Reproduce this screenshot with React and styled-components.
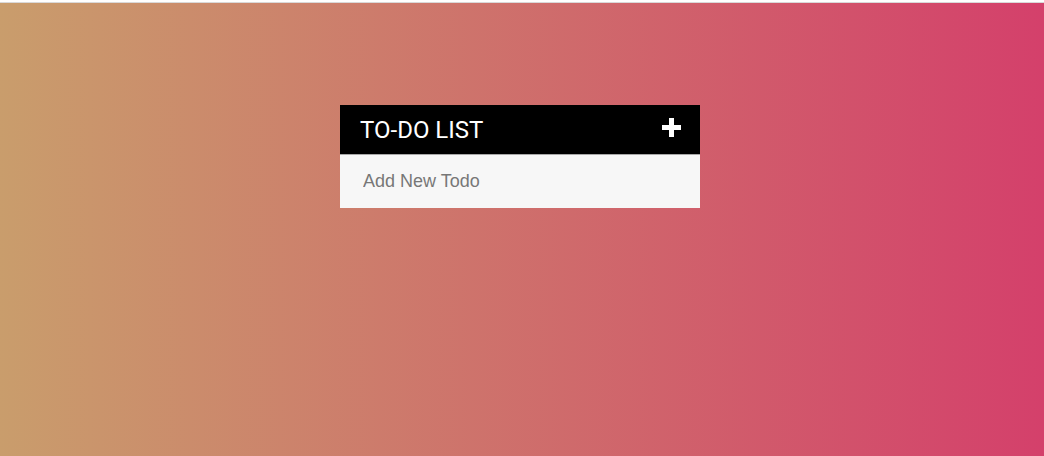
import React from 'react';
import styled, { createGlobalStyle } from 'styled-components';

const GlobalStyle = createGlobalStyle`
  html, body {
    margin: 0;
    padding: 0;
    background: #fff;
  }
`;

const TopStrip = styled.div`
  height: 2px;
  background: #fff;
  border-bottom: 1px solid #d9d9d9;
`;

const Page = styled.div`
  height: 453px;
  background: linear-gradient(to right, #c99d6c, #d4406b);
  display: flex;
  justify-content: center;
  padding: 102px 4px 0 0;
  box-sizing: border-box;
`;

const Card = styled.div`
  width: 360px;
  align-self: flex-start;
`;

const Header = styled.div`
  height: 49px;
  background: #000;
  border-bottom: 1px solid #a8a8a8;
  display: flex;
  align-items: center;
  justify-content: space-between;
  padding: 0 19px 0 20px;
`;

const Title = styled.h1`
  margin: 0;
  font-family: Roboto, "Liberation Sans", sans-serif;
  font-weight: 400;
  font-size: 24px;
  line-height: 1;
  color: #fff;
`;

const AddButton = styled.button`
  background: none;
  border: none;
  padding: 0;
  width: 20px;
  height: 20px;
  display: flex;
  align-items: center;
  justify-content: center;
  cursor: pointer;
  margin-top: -4px;
`;

const Input = styled.input`
  display: block;
  width: 100%;
  height: 53px;
  box-sizing: border-box;
  border: none;
  outline: none;
  background: #f7f7f7;
  padding: 0 23px;
  font-family: "Liberation Sans", Arial, sans-serif;
  font-size: 18px;
  color: #333;

  &::placeholder {
    color: #777;
  }
`;

const PlusIcon = () => (
  <svg width="19" height="19" viewBox="0 0 19 19">
    <rect x="7" y="0" width="5" height="19" fill="#fff" />
    <rect x="0" y="7" width="19" height="5" fill="#fff" />
  </svg>
);

const App = () => {
  return (
    <>
      <GlobalStyle />
      <TopStrip />
      <Page>
        <Card>
          <Header>
            <Title>TO-DO LIST</Title>
            <AddButton aria-label="Add todo">
              <PlusIcon />
            </AddButton>
          </Header>
          <Input type="text" placeholder="Add New Todo" />
        </Card>
      </Page>
    </>
  );
};

export default App;
